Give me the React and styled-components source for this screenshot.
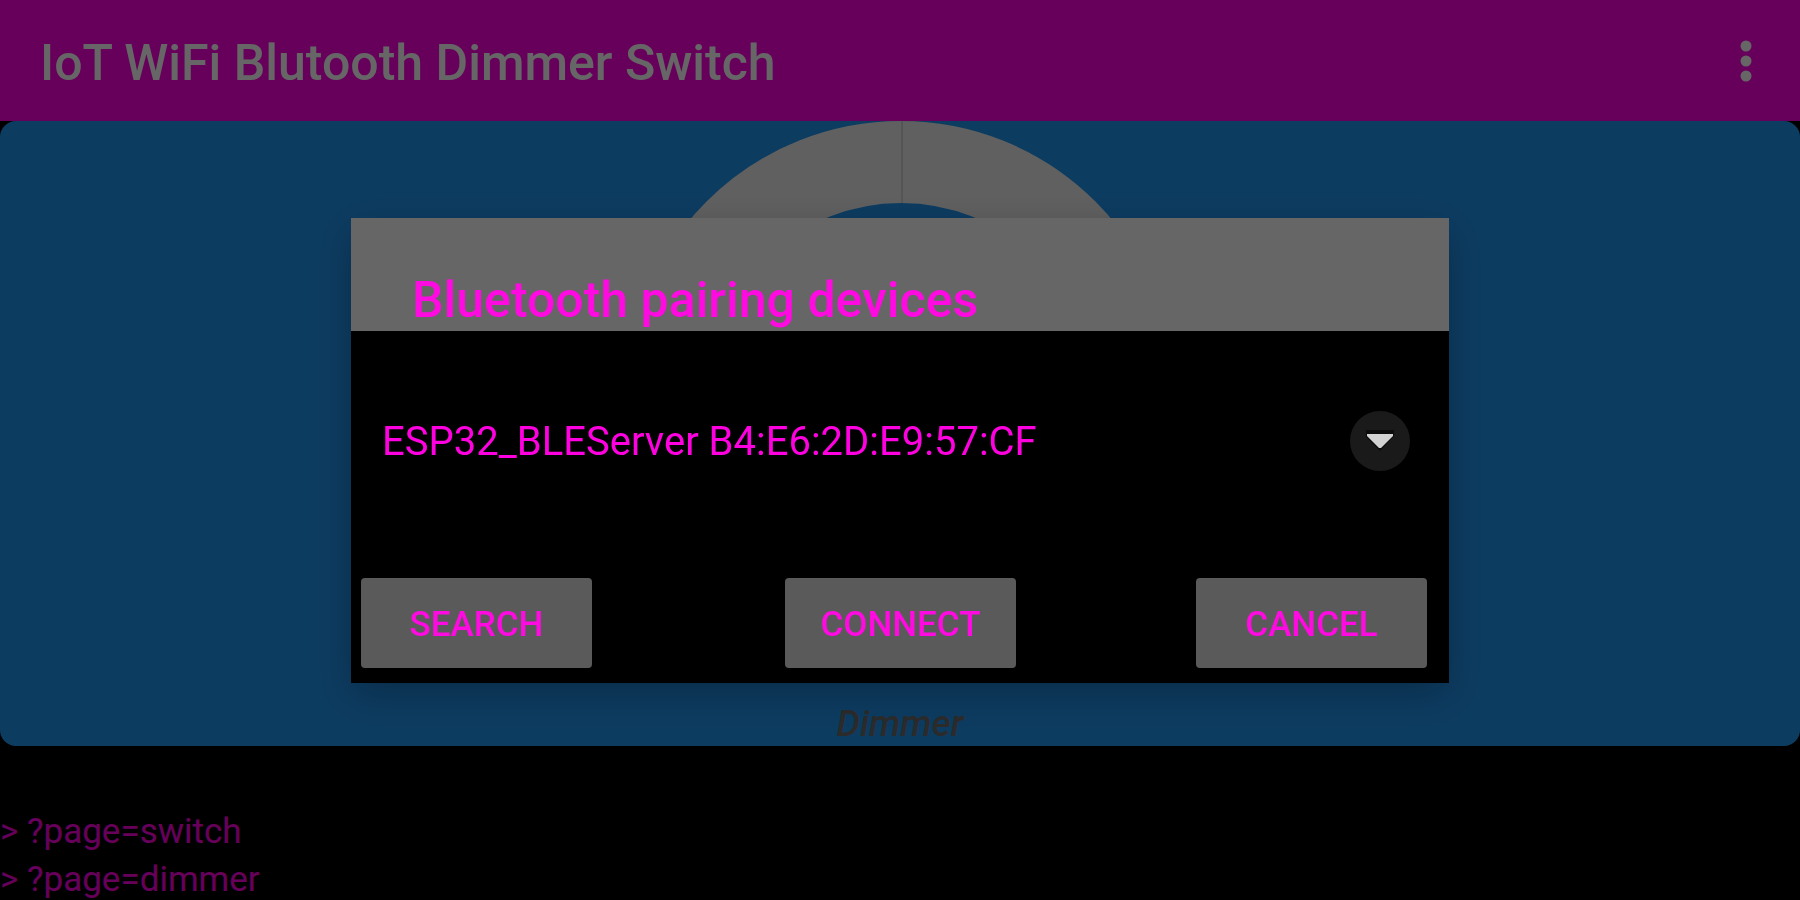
import React, { useState } from 'react';
import styled, { createGlobalStyle } from 'styled-components';

const GlobalStyle = createGlobalStyle`
  * {
    box-sizing: border-box;
  }
  body {
    margin: 0;
    background: black;
    font-family: Roboto, "Liberation Sans", sans-serif;
  }
  button, select {
    font-family: inherit;
  }
`
const Page = styled.div`
  display: flex;
  flex-direction: column;
  height: 100vh;
  min-height: 600px;
  overflow: hidden;
`
const AppBar = styled.header`
  display: flex;
  align-items: center;
  justify-content: space-between;
  height: 121px;
  padding: 0 44px 0 40px;
  background: #ff00e1;
`
const Title = styled.h1`
  margin: 0;
  padding-top: 4px;
  font-size: 50px;
  line-height: 60px;
  font-weight: 500;
  color: white;
`
const MenuButton = styled.button`
  display: flex;
  padding: 0;
  border: none;
  background: none;
`
const Panel = styled.main`
  flex: 1;
  display: flex;
  flex-direction: column;
  align-items: center;
  justify-content: space-between;
  min-height: 0;
  overflow: hidden;
  border-radius: 16px;
  background: #2196f3;
`
const Label = styled.p`
  margin: 0;
  font-size: 37px;
  line-height: 44px;
  font-style: italic;
  font-weight: 500;
  color: #6c6c6c;
`
const Console = styled.div`
  height: 154px;
  padding-top: 62px;
  overflow: hidden;
`
const Line = styled.p`
  margin: 0;
  font-size: 35px;
  line-height: 48px;
  color: #ff00e1;
`
const Backdrop = styled.div`
  position: fixed;
  inset: 0;
  display: flex;
  align-items: center;
  justify-content: center;
  background: rgba(0, 0, 0, 0.6);
`
const Dialog = styled.section`
  width: 61%;
  background: black;
  box-shadow: 0 12px 36px rgba(0, 0, 0, 0.25);
`
const DialogTitle = styled.h2`
  margin: 0;
  padding: 52px 61px 1px;
  font-size: 50px;
  line-height: 60px;
  font-weight: 500;
  color: #ff0ae1;
  background: #666;
`
const Picker = styled.div`
  display: flex;
  align-items: center;
  height: 220px;
  padding: 0 39px 0 31px;
`
const Select = styled.select`
  flex: 1;
  height: 60px;
  padding: 2px 0 0;
  border: none;
  appearance: none;
  background: transparent;
  font-size: 40px;
  color: #ff00e1;
`
const Actions = styled.div`
  display: grid;
  grid-template-columns: 1fr auto 1fr;
  padding: 27px 9px 15px 10px;
`
const Button = styled.button`
  justify-self: ${props => props.$side};
  width: 231px;
  height: 90px;
  margin-right: ${props => (props.$side === 'end' ? '13px' : '0')};
  padding: 4px 0 0;
  border: none;
  border-radius: 4px;
  background: #5a5a5b;
  color: #ff0ae1;
  font-size: 35px;
  font-weight: 500;
`

function Dial() {
  return (
    <svg width="550" height="550" viewBox="0 0 550 550">
      <circle cx="276" cy="275" r="234" fill="none" stroke="#f0f0f0" strokeWidth="82" />
      <path d="M277 0V82" stroke="#d0d8de" strokeWidth="2" />
    </svg>
  )
}

function MenuIcon() {
  return (
    <svg width="20" height="48" viewBox="0 0 20 48" fill="white">
      <circle cx="10" cy="9" r="5.5" />
      <circle cx="10" cy="24" r="5.5" />
      <circle cx="10" cy="39" r="5.5" />
    </svg>
  )
}

function Arrow() {
  return (
    <svg width="60" height="62" viewBox="0 0 60 62">
      <circle cx="30" cy="31" r="30" fill="#1a1a1a" />
      <path d="M16 20H44V26L30 41L16 27Z" fill="#0c0c0c" />
      <path d="M17 24H43V26L31 38H29L17 26Z" fill="#d2d2d2" />
    </svg>
  )
}

function PairingDialog({ devices }) {
  const [device, setDevice] = useState(devices[0]);

  return (
    <Dialog role="dialog" aria-labelledby="pairing-title">
      <DialogTitle id="pairing-title">Bluetooth pairing devices</DialogTitle>
      <Picker>
        <Select
          aria-labelledby="pairing-title"
          value={device}
          onChange={e => setDevice(e.target.value)}
        >
          {devices.map(name => <option key={name}>{name}</option>)}
        </Select>
        <Arrow />
      </Picker>
      <Actions>
        <Button $side="start">SEARCH</Button>
        <Button $side="center">CONNECT</Button>
        <Button $side="end">CANCEL</Button>
      </Actions>
    </Dialog>
  )
}

function App() {
  return (
    <>
      <GlobalStyle />
      <Page>
        <AppBar>
          <Title>IoT WiFi Blutooth Dimmer Switch</Title>
          <MenuButton aria-label="Menu"><MenuIcon /></MenuButton>
        </AppBar>
        <Panel>
          <Dial />
          <Label>Dimmer</Label>
        </Panel>
        <Console>
          <Line>&gt; ?page=switch</Line>
          <Line>&gt; ?page=dimmer</Line>
        </Console>
      </Page>
      <Backdrop>
        <PairingDialog devices={['ESP32_BLEServer B4:E6:2D:E9:57:CF']} />
      </Backdrop>
    </>
  )
}

export default App
